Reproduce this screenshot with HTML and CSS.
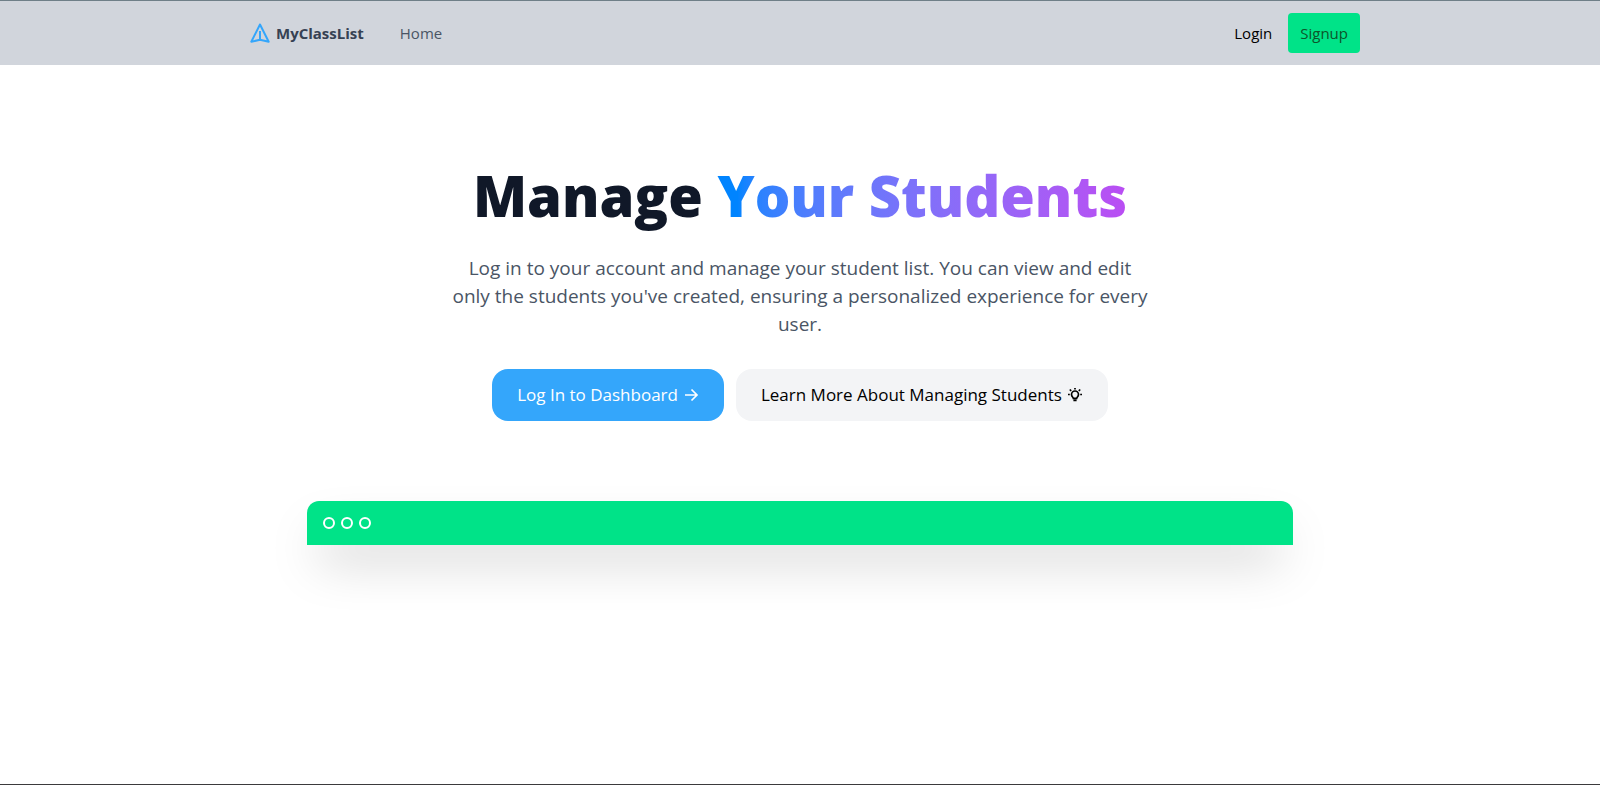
FILE: index.html
```html
<!DOCTYPE html>
<html lang="en">
<head>
<meta charset="utf-8">
<meta name="viewport" content="width=device-width, initial-scale=1">
<title>MyClassList</title>
<link rel="stylesheet" href="styles.css">
</head>
<body>
<header class="site-header">
  <nav class="nav">
    <a class="brand" href="#">
      <svg class="brand-icon" viewBox="0 0 20 20" aria-hidden="true"><path d="M10 1.5 L1.3 18.7 L10 16.8 L18.7 18.7 Z M10 8 V16.8"/></svg>
      <span>MyClassList</span>
    </a>
    <a class="nav-link" href="#">Home</a>
    <div class="nav-actions">
      <a class="login" href="#">Login</a>
      <a class="signup" href="#">Signup</a>
    </div>
  </nav>
</header>
<main class="hero">
  <h1 class="title">Manage <span class="title-accent">Your Students</span></h1>
  <p class="lead">Log in to your account and manage your student list. You can view and edit only the students you've created, ensuring a personalized experience for every user.</p>
  <div class="actions">
    <a class="button button-primary" href="#">Log In to Dashboard
      <svg class="button-icon" viewBox="0 0 16 16" aria-hidden="true"><path d="M2 8 H14 M8.5 2.5 L14 8 L8.5 13.5"/></svg>
    </a>
    <a class="button button-muted" href="#">Learn More About Managing Students
      <svg class="button-icon" viewBox="0 0 16 16" aria-hidden="true"><path d="M6.4 11.4 C6.4 10.4 4.5 9.8 4.5 7.5 A3.5 3.5 0 0 1 11.5 7.5 C11.5 9.8 9.6 10.4 9.6 11.4 Z M6.4 13.4 H9.6 M8 1 V2.6 M1 7.5 H2.8 M13.2 7.5 H15 M2.8 2.5 L4.2 3.9 M13.2 2.5 L11.8 3.9"/></svg>
    </a>
  </div>
  <div class="window">
    <span class="dot"></span><span class="dot"></span><span class="dot"></span>
  </div>
</main>
</body>
</html>
```
FILE: styles.css
```css
* { box-sizing: border-box; }
body {
  margin: 0;
  min-height: 100vh;
  background: #fff;
  border-top: 1px solid #6f7f88;
  border-bottom: 1px solid #3b3a3c;
  font-family: "Open Sans", "Noto Sans", sans-serif;
  font-size: 15px;
  line-height: 24px;
}
a { color: inherit; text-decoration: none; }
.site-header { background: #d1d5dc; padding: 12px 240px; }
.nav { display: flex; align-items: center; max-width: 1120px; margin: 0 auto; }
.brand { display: flex; align-items: center; gap: 6px; margin-left: 10px; color: #364153; font-weight: 700; }
.brand-icon { width: 20px; height: 20px; fill: none; stroke: #34a6fb; stroke-width: 2; stroke-linejoin: round; }
.nav-link { margin-left: 36px; color: #4a5565; }
.nav-actions { display: flex; align-items: center; gap: 16px; margin-left: auto; }
.login { color: #000; }
.signup { padding: 8px 12px; border-radius: 4px; background: #00e388; color: #0d542b; }
.hero { display: flex; flex-direction: column; align-items: center; padding: 96px 32px; }
.title { margin: 0; color: #101828; font-size: 56px; font-weight: 800; line-height: 68px; text-align: center; }
.title-accent { background: linear-gradient(to right in oklab, #0084ff 5%, #ba4df3); background-clip: text; -webkit-background-clip: text; color: transparent; }
.lead { max-width: 704px; margin: 25px 0 31px; color: #4a5565; font-size: 19px; line-height: 28px; text-align: center; }
.actions { display: flex; gap: 12px; }
.button { display: flex; align-items: center; gap: 5px; padding: 12px 25px; border-radius: 16px; font-size: 17px; line-height: 28px; }
.button-primary { background: #34a6fb; color: #fff; }
.button-muted { background: #f3f4f6; color: #000; }
.button-icon { width: 16px; height: 16px; fill: none; stroke: currentColor; stroke-width: 1.7; }
.window { display: flex; gap: 6px; width: 100%; max-width: 986px; margin-top: 80px; padding: 16px; border-radius: 12px 12px 0 0; background: #00e388; box-shadow: 0 25px 50px -12px rgba(0, 0, 0, .25); }
.dot { width: 12px; height: 12px; border: 2px solid #fff; border-radius: 50%; }
```
